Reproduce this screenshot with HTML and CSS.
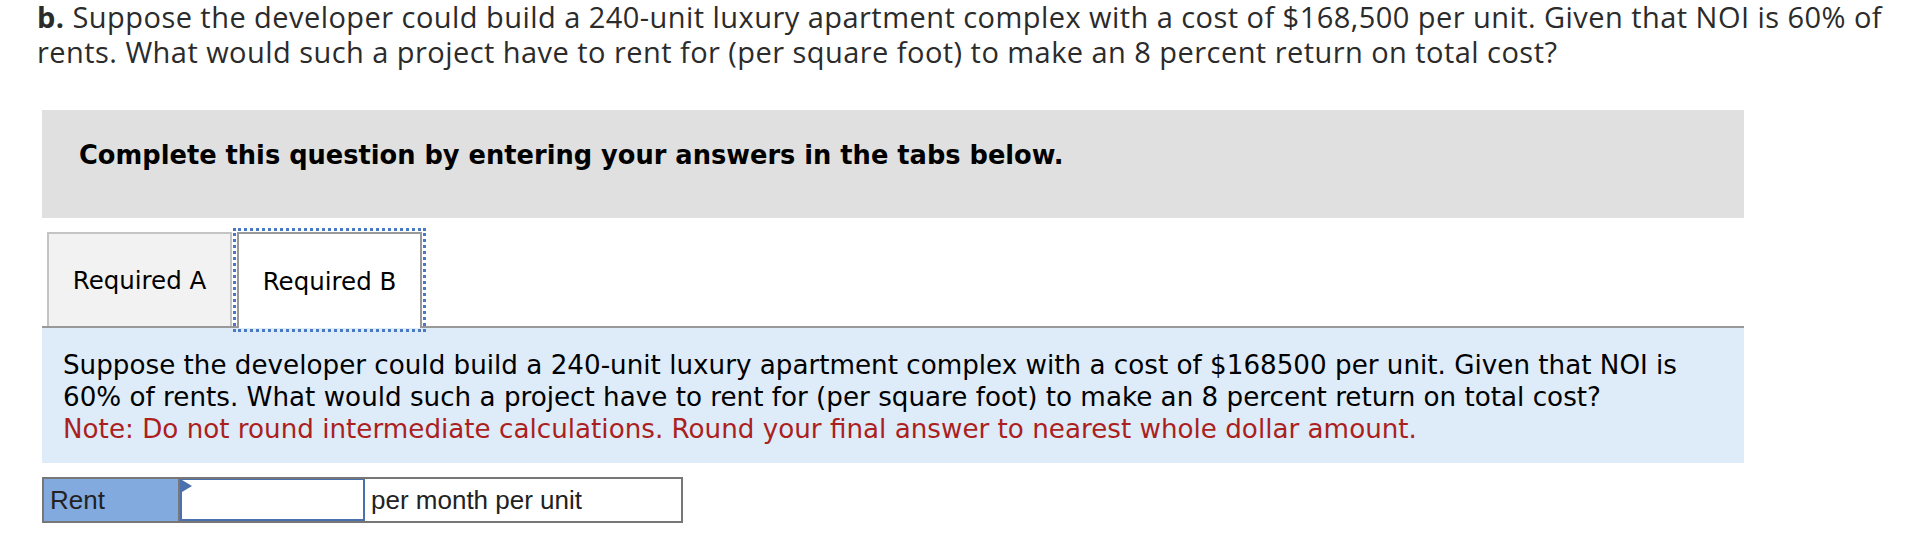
FILE: index.html
```html
<!DOCTYPE html>
<html lang="en">

<head>
    <meta charset="UTF-8">
    <meta name="viewport" content="width=device-width, initial-scale=1.0">
    <title>Question b</title>
    <link rel="stylesheet" href="styles.css">
</head>

<body>
    <p class="question-intro"><strong>b.</strong> Suppose the developer could build a 240-unit luxury apartment complex with a cost of $168,500 per unit. Given that NOI is 60% of rents. What would such a project have to rent for (per square foot) to make an 8 percent return on total cost?</p>

    <div class="question-wrap">
        <div class="instructions">
            <strong>Complete this question by entering your answers in the tabs below.</strong>
        </div>

        <div class="tabs">
            <div class="tab">Required A</div>
            <div class="tab tab-active">Required B</div>
        </div>

        <div class="tab-panel">
            <p>Suppose the developer could build a 240-unit luxury apartment complex with a cost of $168500 per unit. Given that NOI is 60% of rents. What would such a project have to rent for (per square foot) to make an 8 percent return on total cost?</p>
            <p class="note">Note: Do not round intermediate calculations. Round your final answer to nearest whole dollar amount.</p>
        </div>

        <div class="answer-row">
            <div class="answer-label">Rent</div>
            <div class="answer-input"><input type="text" aria-label="Rent"></div>
            <div class="answer-unit">per month per unit</div>
        </div>
    </div>
</body>

</html>
```

FILE: styles.css
```css
body {
    margin: 0;
    background: #fff;
}

.question-intro {
    margin: -1px 26px 0 37px;
    font-family: "Open Sans", Lato, sans-serif;
    font-size: 29px;
    line-height: 35px;
    letter-spacing: 0.45px;
    color: #2b2b2b;
}

.question-intro strong {
    font-weight: bold;
}

.question-wrap {
    width: 1702px;
    margin: 41px 0 0 42px;
    font-family: "DejaVu Sans", Verdana, sans-serif;
    color: #000;
}

/* bandeau gris */
.instructions {
    height: 108px;
    box-sizing: border-box;
    padding: 31px 0 0 37px;
    background: #e0e0e0;
    font-size: 25.7px;
    line-height: 28px;
}

.tabs {
    display: flex;
    gap: 5px;
    padding: 14px 0 0 5px;
    border-bottom: 2px solid #999;
}

.tab {
    width: 185px;
    height: 94px;
    box-sizing: border-box;
    display: flex;
    align-items: center;
    justify-content: center;
    background: #f2f2f2;
    border: 2px solid #c4c4c4;
    border-bottom: none;
    font-size: 24.5px;
}

.tab-active {
    background: #fff;
    border-color: #999;
    height: 96px;
    margin-bottom: -2px;
    outline: 3px dotted #4a78c2;
    outline-offset: 1px;
}

.tab-panel {
    padding: 21px 40px 18px 21px;
    background: #deebf8;
    font-size: 26.2px;
    line-height: 32px;
}

.tab-panel p {
    margin: 0;
}

.tab-panel .note {
    color: #ab1f1f;
}

/* ligne de réponse */
.answer-row {
    display: flex;
    width: 641px;
    height: 46px;
    box-sizing: border-box;
    margin-top: 14px;
    border: 2px solid #777;
    font-family: "Liberation Sans", Arial, sans-serif;
    font-size: 26px;
    color: #222;
}

.answer-label {
    width: 136px;
    display: flex;
    align-items: center;
    padding-left: 6px;
    box-sizing: border-box;
    background: #82aadf;
    border-right: 2px solid #777;
}

.answer-input {
    position: relative;
    width: 185px;
    box-sizing: border-box;
    border: 2px solid #4a70ae;
    border-top-width: 1px;
}

.answer-input::before {
    content: "";
    position: absolute;
    left: 0;
    top: 0;
    border-left: 10px solid #4a70ae;
    border-top: 6px solid transparent;
    border-bottom: 6px solid transparent;
}

.answer-input input {
    width: 100%;
    height: 100%;
    box-sizing: border-box;
    border: none;
    outline: none;
    padding: 0 6px;
    font: inherit;
}

.answer-unit {
    flex: 1;
    display: flex;
    align-items: center;
    padding-left: 6px;
    background: #fff;
}
```
